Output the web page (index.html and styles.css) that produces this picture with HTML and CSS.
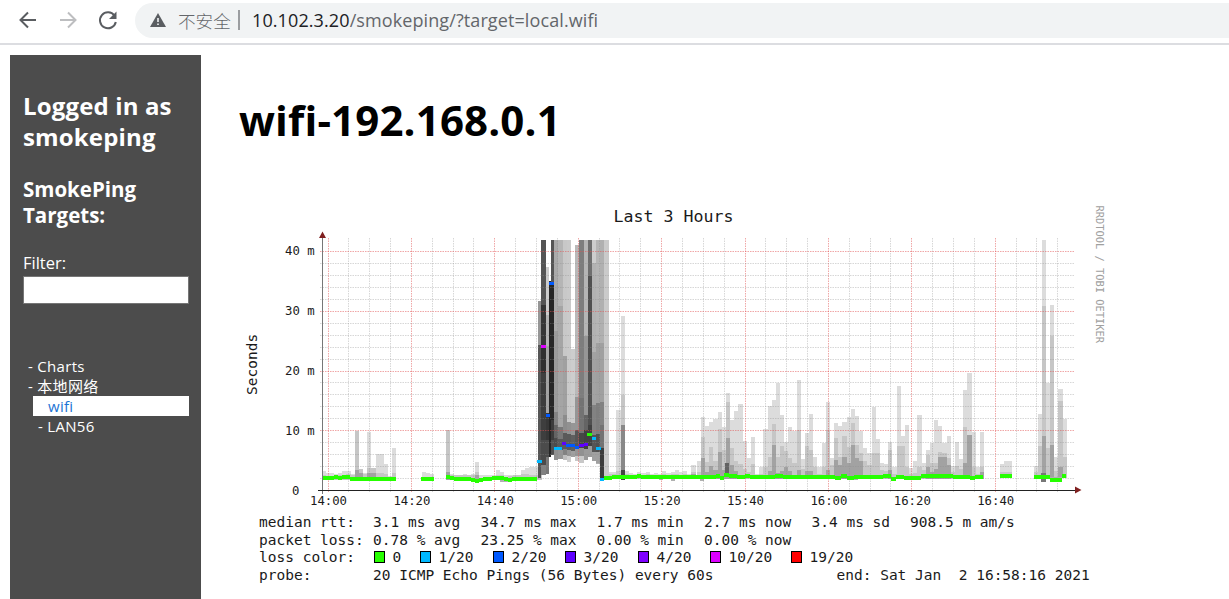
FILE: index.html
```html
<!DOCTYPE html>
<html lang="zh-CN">
<head>
    <meta charset="UTF-8">
    <title>SmokePing</title>
    <link rel="stylesheet" href="styles.css">
</head>
<body>
    <header class="toolbar">
        <svg class="nav-icon" viewBox="0 0 24 24"><path d="M20 12H5M12 4.5L4.5 12l7.5 7.5"/></svg>
        <svg class="nav-icon disabled" viewBox="0 0 24 24"><path d="M4 12h15M12 4.5L19.5 12 12 19.5"/></svg>
        <svg class="nav-icon" viewBox="0 0 24 24"><path d="M18.5 7.600A8 8 0 1 0 19.800 14"/><path class="solid" d="M20.500 3.500v7.500h-7.500z"/></svg>
        <div class="address-bar">
            <svg class="warning" viewBox="0 0 16 14"><path d="M8 0l8 14H0z"/><path class="mark" d="M7.2 5h1.600v4H7.200zM7.200 10.500h1.600v1.600H7.200z"/></svg>
            <span class="insecure">不安全</span>
            <span class="divider"></span>
            <span class="url"><b>10.102.3.20</b>/smokeping/?target=local.wifi</span>
        </div>
    </header>
    <div class="page">
        <aside class="sidebar">
            <h2>Logged in as<br>smokeping</h2>
            <h3>SmokePing<br>Targets:</h3>
            <label for="filter">Filter:</label>
            <input type="text" id="filter">
            <ul class="menu">
                <li>- Charts</li>
                <li>- 本地网络</li>
                <li class="active">wifi</li>
                <li class="sub">- LAN56</li>
            </ul>
        </aside>
        <main class="main">
            <h1>wifi-192.168.0.1</h1>
            <svg class="graph" viewBox="239 195 871 404">
                <g id="smoke"></g>
                <g id="grid"></g>
                <g id="median"></g>
                <path class="axis" d="M322.5 238v256"/>
                <path class="axis dark" d="M318 490.5h759"/>
                <path class="arrow" d="M319 238l3.5-6.500 3.500 6.500zM1075 486.500l6.500 3.500-6.500 3.500z"/>
                <text class="title" x="613.5" y="221.5">Last 3 Hours</text>
                <text class="label" transform="translate(257 395) rotate(-90)">Seconds</text>
                <text class="credit" transform="translate(1096 205.5) rotate(90)">RRDTOOL / TOBI OETIKER</text>
                <g id="ticks"></g>
                <g class="legend">
                    <text y="527"><tspan x="259">median rtt:</tspan><tspan x="373">3.1 ms avg</tspan><tspan x="480.5">34.7 ms max</tspan><tspan x="596.5">1.7 ms min</tspan><tspan x="704">2.7 ms now</tspan><tspan x="811.5">3.4 ms sd</tspan><tspan x="910">908.5 m am/s</tspan></text>
                    <text y="544.5"><tspan x="259">packet loss:</tspan><tspan x="373">0.78 % avg</tspan><tspan x="480.5">23.25 % max</tspan><tspan x="596.5">0.00 % min</tspan><tspan x="704">0.00 % now</tspan></text>
                    <text x="259" y="562">loss color:</text>
                    <text y="579.5"><tspan x="259">probe:</tspan><tspan x="373">20 ICMP Echo Pings (56 Bytes) every 60s</tspan><tspan x="836.5">end: Sat Jan  2 16:58:16 2021</tspan></text>
                </g>
                <g id="colors" class="legend"></g>
            </svg>
        </main>
    </div>
    <script src="graph.js"></script>
</body>
</html>
```
FILE: styles.css
```css
body {
    margin: 0;
    height: 599px;
    overflow: hidden;
    background: #fff;
    font-family: "Open Sans", "Noto Sans CJK SC", sans-serif;
}
.toolbar {
    display: flex;
    align-items: center;
    box-sizing: border-box;
    height: 45px;
    padding: 0 0 3px 16px;
    border-bottom: 2px solid #dcdde1;
}
.nav-icon {
    width: 24px;
    height: 24px;
    margin-right: 16px;
    fill: none;
    stroke: #5a5d61;
    stroke-width: 2;
}
.nav-icon.disabled {
    stroke: #bdbec0;
}
.nav-icon .solid {
    fill: #5a5d61;
    stroke: none;
}
.address-bar {
    display: flex;
    align-items: center;
    flex: 1;
    height: 35px;
    margin-left: -1px;
    padding-left: 15px;
    border-radius: 18px 0 0 18px;
    background: #f1f3f4;
    color: #63666a;
    font-size: 18px;
    white-space: nowrap;
}
.warning {
    width: 16px;
    height: 14px;
    margin-right: 12px;
    fill: #5a5d61;
}
.warning .mark {
    fill: #f1f3f4;
}
.insecure {
    width: 53px;
    font-family: "Noto Sans CJK SC", sans-serif;
    font-weight: 300;
    font-size: 17.6px;
}
.divider {
    width: 2px;
    height: 20px;
    margin: 0 12px 0 7px;
    background: #9b9da0;
}
.url {
    letter-spacing: 0.1px;
}
.url b {
    color: #202124;
    font-weight: 400;
}
.page {
    display: flex;
    height: 544px;
    padding: 10px 0 0 10px;
}
.sidebar {
    box-sizing: border-box;
    width: 191px;
    padding: 35px 12px 0 13px;
    background: #4c4c4c;
    color: #fff;
}
h2 {
    margin: 0 0 24px;
    font-size: 24px;
    line-height: 31px;
    letter-spacing: 0.15px;
}
h3 {
    margin: 0 0 23px;
    font-size: 20.5px;
    line-height: 26px;
}
.sidebar label {
    display: block;
    font-size: 16.5px;
    line-height: 24px;
}
.sidebar input {
    display: block;
    box-sizing: border-box;
    width: 166px;
    height: 28px;
    margin: 1px 0 52px;
    padding: 0;
    border: 1px solid #767676;
    background: #fff;
}
.menu {
    margin: 0;
    padding: 0;
    list-style: none;
    font-size: 15px;
    line-height: 20px;
    letter-spacing: 0.3px;
}
.menu li {
    height: 20px;
    padding-left: 5px;
}
.menu .active {
    margin-left: 10px;
    padding-left: 15px;
    background: #fff;
    color: #1c74d4;
}
.menu .sub {
    padding-left: 15px;
}
.main {
    flex: 1;
    padding-left: 38px;
}
h1 {
    height: 60px;
    margin: 35px 0 45px;
    font-size: 42px;
    line-height: 60px;
    letter-spacing: 0.15px;
    color: #000;
}
.graph {
    display: block;
    width: 871px;
    height: 404px;
    font-family: "DejaVu Sans Mono", monospace;
}
.graph text {
    white-space: pre;
    fill: #1a1a1a;
}
.graph .title {
    font-size: 16.6px;
}
.graph .label {
    font-size: 14.5px;
}
.graph .credit {
    font-size: 10.4px;
    fill: #a0a0a0;
}
.legend {
    font-size: 14.5px;
}
.tick {
    font-size: 12.3px;
}
#smoke rect,
#median rect {
    shape-rendering: crispEdges;
}
.axis {
    stroke: #777;
}
.axis.dark {
    stroke: #222;
}
.arrow {
    fill: #802020;
}
.minor,
.major {
    fill: none;
    stroke: rgba(140, 140, 140, 0.35);
    stroke-dasharray: 1.5 1;
}
.major {
    stroke: rgba(225, 80, 80, 0.5);
}
```
FILE: graph.js
```javascript
const NS = 'http://www.w3.org/2000/svg';
const STEP = 4.165;
const COLORS = {
    green: '#26ff00', cyan: '#00b8ff', blue: '#0059ff',
    indigo: '#5e00ff', violet: '#7e00ff', magenta: '#dd00ff', red: '#ff0000'
};

function add(parent, name, attrs, text) {
    const el = document.createElementNS(NS, name);
    for (const key in attrs) el.setAttribute(key, attrs[key]);
    if (text) el.textContent = text;
    document.getElementById(parent).appendChild(el);
}

function rect(parent, x1, x2, y1, y2, fill) {
    const left = Math.round(x1);
    add(parent, 'rect', { x: left, y: y1, width: Math.round(x2) - left, height: y2 - y1, fill: fill });
}

// one column per minute: tops of the light, middle and dark smoke
const runs = [
    { x: 321.5, bottom: 480, cols: [
        [471, 475], [473, 476], [473, 476], [474, 476], [473, 475], [471, 475], [471, 474], [474, 475],
        [431, 431, 470], [469, 469, 473], [473, 474], [432, 468, 473], [468, 468, 473], [454, 473],
        [454, 473], [464, 474], [476, 477], [448, 473]] },
    { x: 421.5, bottom: 478, cols: [[472], [473], [474]] },
    { x: 446, bottom: 480, cols: [
        [430, 430, 472], [474, 475], [475, 475], [475, 475], [474, 475], [475, 475], [474, 475],
        [462, 472, 475], [475], [475], [475], [475], [470, 475], [472, 475], [475], [475, 476],
        [475, 475], [475, 475], [470, 474], [468, 474], [467, 475], [467, 475], [433, 466]] },
    { x: 604, bottom: 479, cols: [
        [471, 474], [472, 474], [472, 474], [410, 471], [355, 395, 425], [471, 474], [473, 475],
        [474, 475], [472, 475], [473, 475], [472, 474], [474, 475], [473], [474], [471, 474],
        [473, 475], [472, 474], [470, 474], [472, 475], [471, 474], [474], [465, 472, 474]] },
    { x: 696.7, bottom: 479, cols: [
        [461, 472], [417, 437, 458], [426, 462, 472], [422, 447, 466], [419, 461, 470], [412, 429, 452],
        [427, 450, 470], [393, 402, 438], [420, 448, 465], [411, 461, 471], [404, 464], [441, 469],
        [458, 472], [437, 464], [474], [467, 474], [429, 467], [406, 457, 471], [400, 424, 445],
        [383, 457, 473], [415, 446, 471], [442, 451, 467], [427, 458, 471], [431, 463], [380, 430, 470],
        [459, 469], [433, 446, 471], [414, 450, 471], [457, 467], [467, 474], [443, 467], [402, 430, 470],
        [458, 465], [423, 438, 460], [426, 457, 465], [422, 436, 457], [417, 447, 463], [409, 423, 445],
        [416, 445, 458], [431, 453, 461], [448, 461], [453, 465], [407, 453], [439, 453], [463, 470],
        [464, 471], [442, 450, 470], [467, 474], [386, 446], [436, 446], [425, 467], [468, 474],
        [461, 473], [415, 467], [463, 470], [450, 455, 467], [443, 463, 472], [420, 463, 469],
        [426, 452, 457], [443, 453, 457], [436, 458, 465], [466, 472], [442, 466], [459, 469],
        [390, 427, 463], [373, 435, 435], [432, 467], [467, 474], [432, 467, 472]] },
    { x: 1000, bottom: 477, cols: [[464, 472], [461, 472], [461, 472]] },
    { x: 1033.5, bottom: 478, cols: [
        [466, 472], [414, 446], [240, 306, 436], [383, 448], [305, 336, 445], [457, 471],
        [389, 401, 467], [419, 457]] }
];
const shades = ['#dcdcdc', '#c6c6c6', '#a2a2a2'];

runs.forEach(function (run) {
    run.cols.forEach(function (tops, i) {
        const x = run.x + i * STEP;
        tops.forEach(function (top, n) {
            rect('smoke', x, x + STEP, top, run.bottom, shades[n]);
        });
    });
});
rect('smoke', 621, 625, 316, 355, '#dcdcdc');
rect('smoke', 621, 625, 425, 470, '#888888');
rect('smoke', 621, 625, 470, 480, '#444444');
rect('smoke', 725, 729, 463, 475, '#626262');
rect('smoke', 1041, 1046, 473, 482, '#777777');

// smoke below the median line: x1, x2, bottom
[[354, 362, 481], [366, 396, 480], [471, 479, 481], [500, 508, 482], [596, 600, 464], [659, 663, 480],
    [671, 675, 481], [700, 704, 481], [783, 791, 479], [816, 829, 479], [854, 858, 480],
    [966, 983, 479], [1050, 1062, 480]].forEach(function (s) {
    rect('smoke', s[0], s[1], s[2] - 3, s[2], '#b0b0b0');
});

// the loss burst around 15:00: x1, x2, bottom, then pairs of top and gray level
const burst = [
    [538, 541, 478, 301, 150, 345, 85],
    [541, 546, 475, 240, 85, 305, 55, 345, 48, 373, 62, 440, 75, 465, 130],
    [546, 549, 474, 267, 205, 315, 180, 346, 165, 413, 55, 440, 75, 457, 120],
    [549, 551, 457, 281, 38],
    [551, 554, 455, 240, 85, 282, 38, 420, 60, 440, 80],
    [554, 558, 460, 240, 170, 331, 155, 412, 130, 425, 100, 438, 75, 450, 145],
    [558, 563, 459, 240, 181, 306, 165, 427, 120, 439, 90, 450, 150],
    [563, 567, 460, 240, 200, 356, 160, 415, 140, 433, 90, 449, 130, 455, 190],
    [567, 571, 462, 240, 202, 422, 145, 434, 90, 450, 150, 456, 205],
    [571, 575, 457, 349, 205, 423, 150, 435, 95, 451, 160],
    [575, 579, 461, 245, 185, 397, 150, 430, 85, 449, 150, 456, 200],
    [579, 584, 463, 240, 125, 398, 115, 433, 70, 448, 145, 456, 200],
    [584, 588, 460, 240, 181, 336, 150, 415, 100, 430, 65, 449, 155],
    [588, 592, 457, 240, 110, 276, 80, 425, 65, 446, 155],
    [592, 596, 461, 240, 205, 263, 178, 352, 162, 405, 130, 435, 85, 452, 160],
    [596, 600, 463, 240, 181, 343, 160, 403, 125, 434, 80, 452, 160],
    [600, 604, 479, 240, 176, 343, 160, 402, 130, 425, 115, 448, 60],
    [604, 609, 476, 240, 202]
];
burst.forEach(function (b) {
    for (let i = 3; i < b.length; i += 2) {
        const end = i + 2 < b.length ? b[i + 2] : b[2];
        rect('smoke', b[0], b[1], b[i], end, 'rgb(' + [b[i + 1], b[i + 1], b[i + 1]] + ')');
    }
});

// grid
for (let i = 0; i < 36; i++) {
    const x = Math.floor(328 + i * 20.85) + 0.5;
    if (x < 1075) add('grid', 'path', { class: i % 4 ? 'minor' : 'major', d: 'M' + x + ' 238v255' });
}
for (let i = 1; i <= 20; i++) {
    const y = Math.round(490.3 - i * 11.98) + 0.5;
    add('grid', 'path', { class: i % 5 ? 'minor' : 'major', d: 'M320 ' + y + 'h755' });
}

// median points: x1, x2, y, color
const medians = [
    [322, 334, 477], [334, 338, 476], [338, 342, 477], [342, 350, 476], [350, 396, 477.5],
    [421, 434, 477.5], [446, 450, 476], [450, 454, 477], [454, 471, 478], [471, 475, 479],
    [475, 479, 480], [479, 483, 478.5], [483, 492, 478], [492, 504, 477], [504, 508, 478],
    [508, 512, 479], [512, 537, 477.5],
    [604, 612, 476.5], [612, 637, 475.5], [637, 641, 474.5], [641, 660, 476], [660, 683, 476],
    [683, 716, 476], [716, 720, 475], [720, 724, 477], [724, 729, 474], [729, 737, 475],
    [737, 745, 476], [745, 750, 475], [750, 775, 476], [775, 783, 475], [783, 808, 475.5],
    [808, 835, 475.5], [835, 841, 477], [841, 847, 474.5], [847, 854, 477], [854, 883, 475.5],
    [883, 891, 474.5], [891, 896, 478], [896, 904, 476], [904, 921, 477], [921, 929, 474.5],
    [929, 936, 475], [936, 953, 474.5], [953, 970, 476], [970, 975, 477], [975, 983, 476],
    [1000, 1012, 474.5], [1034, 1050, 476], [1050, 1062, 478.5], [1062, 1066, 475],
    [537, 542, 460.5, 'cyan'], [541, 546, 346, 'magenta'], [546, 550, 414.5, 'blue'],
    [549, 554, 282.5, 'blue'], [554, 562, 447.5, 'cyan'], [562, 566, 442.5, 'indigo'],
    [566, 575, 445, 'blue'], [575, 579, 446.5, 'blue'], [579, 584, 445, 'indigo'],
    [584, 588, 443.5, 'indigo'], [587, 592, 434, 'green'], [592, 596, 438, 'cyan'],
    [596, 601, 448, 'cyan'], [600, 604, 478.5, 'cyan']
];
medians.forEach(function (m) {
    const y = Math.round(m[2]) - 1;
    rect('median', m[0], m[1], y, y + (m[3] ? 3 : 4), COLORS[m[3] || 'green']);
});

// tick labels
['14:00', '14:20', '14:40', '15:00', '15:20', '15:40', '16:00', '16:20', '16:40'].forEach(function (t, i) {
    add('ticks', 'text', { class: 'tick', x: 310 + i * 83.4, y: 504.5 }, t);
});
['10 m', '20 m', '30 m', '40 m'].forEach(function (t, i) {
    add('ticks', 'text', { class: 'tick', x: 285, y: 435 - i * 60 }, t);
});
add('ticks', 'text', { class: 'tick', x: 292, y: 494.5 }, '0');

[[374, '0', 'green'], [420, '1/20', 'cyan'], [493, '2/20', 'blue'], [565, '3/20', 'indigo'],
    [638, '4/20', 'violet'], [710, '10/20', 'magenta'], [791, '19/20', 'red']].forEach(function (c) {
    add('colors', 'rect', { x: c[0] + 0.5, y: 551.5, width: 10, height: 11, fill: COLORS[c[2]], stroke: '#000' });
    add('colors', 'text', { x: c[0] + 18.5, y: 562 }, c[1]);
});
```
